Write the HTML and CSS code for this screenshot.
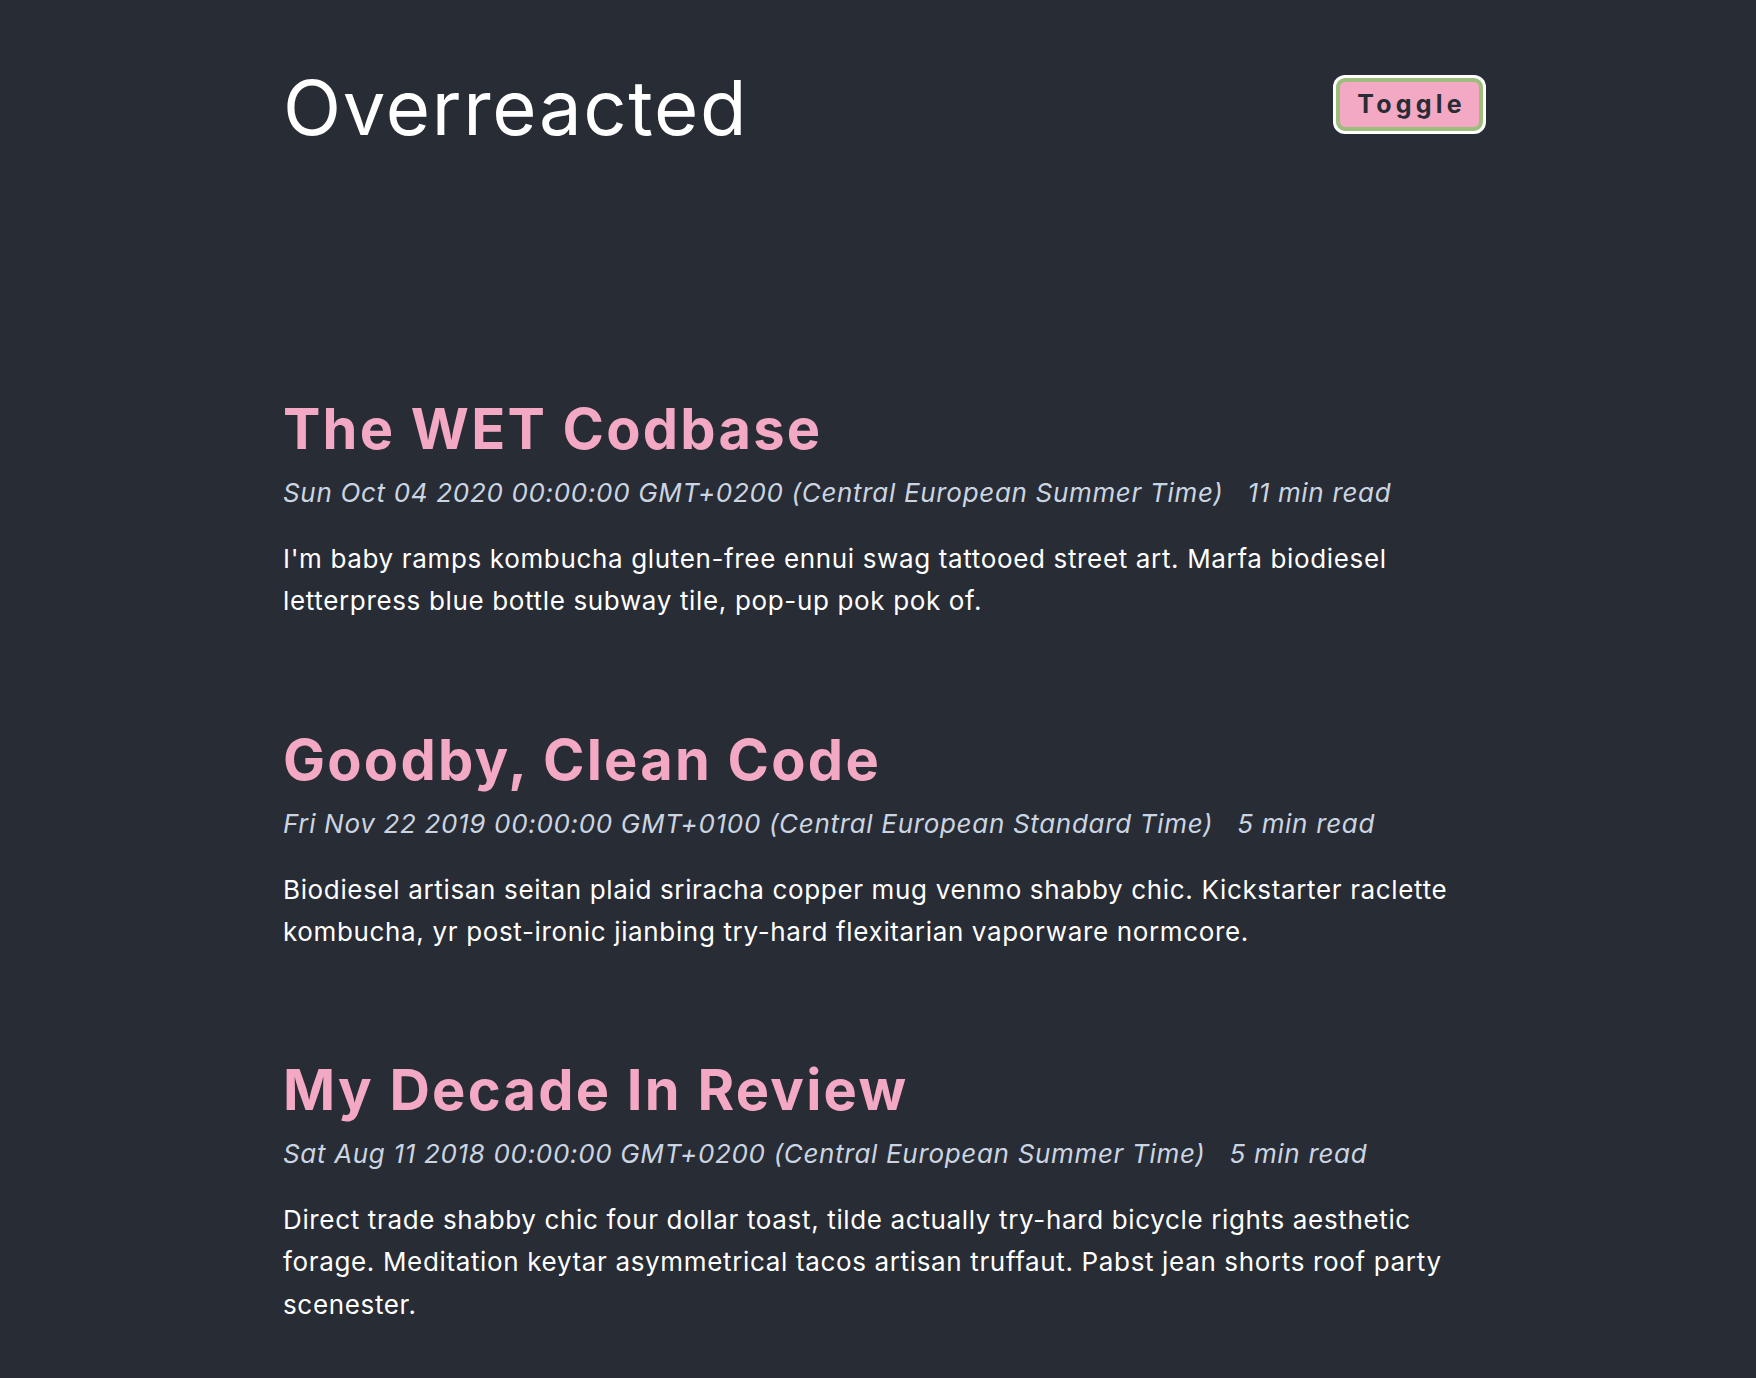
FILE: index.html
```html
<!DOCTYPE html>
<html lang="en">
<head>
<meta charset="utf-8">
<title>Overreacted</title>
<link rel="stylesheet" href="styles.css">
</head>
<body>
<div class="container">
  <header class="site-header">
    <h1 class="site-title">Overreacted</h1>
    <button class="toggle" type="button">Toggle</button>
  </header>
  <main class="posts">
    <article class="post">
      <h2 class="post-title">The WET Codbase</h2>
      <p class="post-meta"><span>Sun Oct 04 2020 00:00:00 GMT+0200 (Central European Summer Time)</span><span class="read">11 min read</span></p>
      <p class="post-excerpt">I'm baby ramps kombucha gluten-free ennui swag tattooed street art. Marfa biodiesel letterpress blue bottle subway tile, pop-up pok pok of.</p>
    </article>
    <article class="post">
      <h2 class="post-title">Goodby, Clean Code</h2>
      <p class="post-meta"><span>Fri Nov 22 2019 00:00:00 GMT+0100 (Central European Standard Time)</span><span class="read">5 min read</span></p>
      <p class="post-excerpt">Biodiesel artisan seitan plaid sriracha copper mug venmo shabby chic. Kickstarter raclette kombucha, yr post-ironic jianbing try-hard flexitarian vaporware normcore.</p>
    </article>
    <article class="post">
      <h2 class="post-title">My Decade In Review</h2>
      <p class="post-meta"><span>Sat Aug 11 2018 00:00:00 GMT+0200 (Central European Summer Time)</span><span class="read">5 min read</span></p>
      <p class="post-excerpt">Direct trade shabby chic four dollar toast, tilde actually try-hard bicycle rights aesthetic forage. Meditation keytar asymmetrical tacos artisan truffaut. Pabst jean shorts roof party scenester.</p>
    </article>
  </main>
</div>
</body>
</html>
```

FILE: styles.css
```css
html, body {
  margin: 0;
  padding: 0;
  background: #282c35;
}

body {
  font-family: Inter, "Noto Sans", sans-serif;
  color: #ffffff;
}

.container {
  width: 1200px;
  margin: 0 auto;
  padding: 69px 0 0 10px;
}

.site-header {
  display: flex;
  justify-content: space-between;
  align-items: flex-start;
}

.site-title {
  margin: 0;
  font-size: 76px;
  line-height: 76px;
  font-weight: 400;
  letter-spacing: 0.022em;
  color: #ffffff;
}

.toggle {
  margin-top: 9px;
  margin-right: 0;
  font-family: Inter, "Noto Sans", sans-serif;
  font-size: 25px;
  line-height: 27px;
  font-weight: 700;
  letter-spacing: 0.17em;
  color: #282c35;
  background: #f3a8c3;
  border: 4px solid #9cbd7c;
  border-radius: 9px;
  box-shadow: 0 0 0 3px #ffffff;
  padding: 9px 13px 9px 17px;
  cursor: pointer;
}

.posts {
  padding-top: 251px;
}

.post {
  margin-bottom: 104px;
}

.post-title {
  margin: 0;
  font-size: 56px;
  line-height: 67px;
  font-weight: 700;
  letter-spacing: 0.04em;
  color: #f3a8c3;
}

.post-meta {
  margin: 10px 0 0;
  font-size: 26px;
  line-height: 39px;
  font-style: italic;
  letter-spacing: 0.026em;
  color: #cbd5e1;
}

.post-meta .read {
  margin-left: 24px;
}

.post-excerpt {
  margin: 26px 0 0;
  font-size: 26px;
  line-height: 42.25px;
  letter-spacing: 0.025em;
  color: #ffffff;
}
```
